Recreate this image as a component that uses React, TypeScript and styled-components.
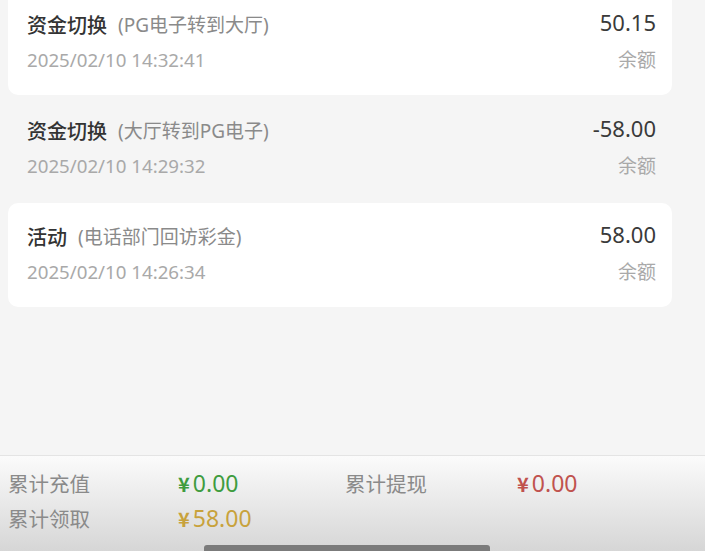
import React from 'react';
import styled, { createGlobalStyle } from 'styled-components';

const GlobalStyle = createGlobalStyle`
  html, body {
    margin: 0;
    padding: 0;
    background: #f5f5f5;
    font-family: "Noto Sans", "Noto Sans CJK SC", sans-serif;
  }
`;

// Layout
const Page = styled.div`
  height: 551px;
  display: flex;
  flex-direction: column;
  overflow: hidden;
  background: #f5f5f5;
`;

const RecordList = styled.div`
  margin-top: -9px;
  padding: 0 33px 0 8px;
  display: flex;
  flex-direction: column;
  gap: 2px;
`;

const RecordCard = styled.div<{ $plain?: boolean }>`
  height: 104px;
  box-sizing: border-box;
  padding: 19px 16px 0 19px;
  border-radius: 10px;
  background: ${(p) => (p.$plain ? 'transparent' : '#ffffff')};
  display: flex;
  justify-content: space-between;
`;

const Column = styled.div<{ $right?: boolean }>`
  display: flex;
  flex-direction: column;
  align-items: ${(p) => (p.$right ? 'flex-end' : 'flex-start')};
`;

const TitleLine = styled.div`
  height: 28px;
  display: flex;
  align-items: center;
`;

const Title = styled.span`
  font-size: 20px;
  font-weight: 500;
  color: #333;
`;

const SubTitle = styled.span`
  margin-left: 11px;
  font-size: 19px;
  color: #8a8a8a;
`;

const DateText = styled.div`
  margin-top: 9px;
  line-height: 26px;
  font-size: 18.7px;
  color: #a9a9a9;
`;

const Amount = styled.div`
  height: 28px;
  line-height: 24px;
  font-size: 22px;
  color: #3a3a3a;
`;

const BalanceLabel = styled.div`
  margin-top: 9px;
  line-height: 26px;
  font-size: 19px;
  color: #a9a9a9;
`;

// Summary bar
const SummaryBar = styled.div`
  margin-top: auto;
  position: relative;
  height: 96px;
  box-sizing: border-box;
  padding: 9px 0 0 8px;
  border-top: 1px solid #e4e4e4;
  background: linear-gradient(#fbfbfb, #d6d6d6);
  display: grid;
  grid-template-columns: 170px 167px 172px 1fr;
  grid-auto-rows: 35px;
  align-items: center;
`;

const SummaryLabel = styled.div`
  font-size: 20.5px;
  color: #8a8a8a;
`;

const SummaryValue = styled.div<{ $color: string }>`
  font-size: 23px;
  color: ${(p) => p.$color};
`;

const Yen = styled.span`
  font-family: "Noto Sans CJK SC", sans-serif;
  font-size: 20px;
  font-weight: 700;
  margin-right: 3px;
`;

const HomeIndicator = styled.div`
  position: absolute;
  left: 204px;
  bottom: 0;
  width: 286px;
  height: 6px;
  border-radius: 3px 3px 0 0;
  background: #7b7b7b;
`;

const records = [
  { title: '资金切换', note: '(PG电子转到大厅)', time: '2025/02/10 14:32:41', amount: '50.15', plain: false },
  { title: '资金切换', note: '(大厅转到PG电子)', time: '2025/02/10 14:29:32', amount: '-58.00', plain: true },
  { title: '活动', note: '(电话部门回访彩金)', time: '2025/02/10 14:26:34', amount: '58.00', plain: false },
];

const App = () => {
  return (
    <Page>
      <GlobalStyle />
      <RecordList>
        {records.map((r, i) => (
          <RecordCard key={i} $plain={r.plain}>
            <Column>
              <TitleLine>
                <Title>{r.title}</Title>
                <SubTitle>{r.note}</SubTitle>
              </TitleLine>
              <DateText>{r.time}</DateText>
            </Column>
            <Column $right>
              <Amount>{r.amount}</Amount>
              <BalanceLabel>余额</BalanceLabel>
            </Column>
          </RecordCard>
        ))}
      </RecordList>

      <SummaryBar>
        <SummaryLabel>累计充值</SummaryLabel>
        <SummaryValue $color="#3f9c3f"><Yen>¥</Yen>0.00</SummaryValue>
        <SummaryLabel>累计提现</SummaryLabel>
        <SummaryValue $color="#c0524e"><Yen>¥</Yen>0.00</SummaryValue>
        <SummaryLabel>累计领取</SummaryLabel>
        <SummaryValue $color="#c8a23c"><Yen>¥</Yen>58.00</SummaryValue>
        <HomeIndicator />
      </SummaryBar>
    </Page>
  );
};

export default App;
